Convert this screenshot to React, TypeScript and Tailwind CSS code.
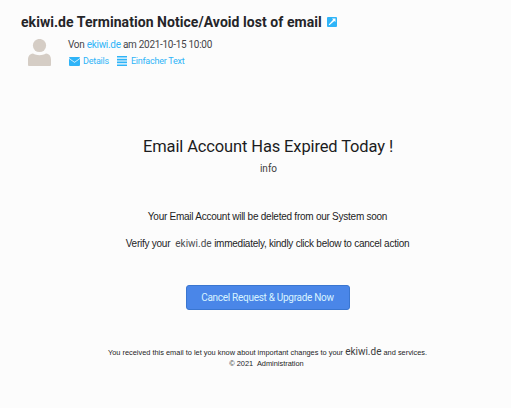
function PersonIcon() {
  return (
    <svg className="h-[27px] w-[23px] shrink-0" viewBox="0 0 23 27" fill="#d5cdc5">
      <circle cx="11.5" cy="6.5" r="6.6" />
      <path d="M1 27Q0 27 0 26v-5c0-3.500 1.500-6 5-6.400 2 1.200 4 1.600 6.500 1.600s4.500-.4 6.500-1.600c3.500.4 5 2.900 5 6.400v5q0 1-1 1z" />
    </svg>
  );
}

function MailIcon() {
  return (
    <svg className="h-[9px] w-[11px] shrink-0" viewBox="0 0 11 9" fill="#2fb4f8">
      <path d="M0 1Q0 0 1 0h9q1 0 1 1L5.500 5z" />
      <path d="M0 1.800l5.500 4L11 1.800V8q0 1-1 1H1Q0 9 0 8z" />
    </svg>
  );
}

function LinesIcon() {
  return (
    <svg className="h-[10px] w-[10px] shrink-0" viewBox="0 0 10 10" fill="#2fb4f8">
      <path d="M0 0h10v1.600H0zM0 2.800h10v1.600H0zM0 5.600h10v1.600H0zM0 8.400h10V10H0z" />
    </svg>
  );
}

function OpenIcon() {
  return (
    <svg className="h-[10px] w-[10px] shrink-0" viewBox="0 0 10 10">
      <rect width="10" height="10" rx="1" fill="#2fb4f8" />
      <path d="M5 1.500h3.500V5L7.300 3.900 2.400 8.300 1.700 7.600 6.100 2.700z" fill="#fff" />
    </svg>
  );
}

export default function App() {
  return (
    <div className="h-[408px] w-[511px] overflow-hidden bg-[#fcfcfc] font-['Roboto',sans-serif] whitespace-pre text-[#1c1c1e]">
      <header className="flex h-[78px] flex-col pt-[12px] pl-[21px]">
        <div className="flex h-[20px] items-center gap-[5px]">
          <h1 className="-mt-px text-[14px] leading-[20px] font-bold tracking-[0.055px] text-[#252529]">ekiwi.de Termination Notice/Avoid lost of email</h1>
          <OpenIcon />
        </div>
        <div className="flex pt-[7px] pl-[7px]">
          <PersonIcon />
          <div className="pl-[17px]">
            <p className="text-[10px] leading-[12px] tracking-[-0.29px] text-[#454549]">
              Von <span className="text-[#2fb4f8]">ekiwi.de</span> am 2021-10-15 10:00
            </p>
            <div className="mt-[4px] flex h-[12px] items-center pl-px text-[9px] leading-[12px] tracking-[-0.24px] text-[#2fb4f8]">
              <MailIcon />
              <span className="pl-[3px]">Details</span>
              <span className="w-[8px]" />
              <LinesIcon />
              <span className="pl-[4px]">Einfacher Text</span>
            </div>
          </div>
        </div>
      </header>

      <main className="flex flex-col items-center pl-[25px]">
        <h2 className="mt-[59px] text-[16.5px] leading-[20px] tracking-[-0.13px]">Email Account Has Expired Today !</h2>
        <p className="mt-[6px] pl-px text-[10px] leading-[12px] text-[#3c3c40]">info</p>
        <p className="mt-[36px] mr-px font-['Liberation_Sans',sans-serif] text-[10px] leading-[12px] tracking-[-0.25px]">
          Your Email Account will be deleted from our System soon
        </p>
        <p className="mt-[15px] mr-px font-['Liberation_Sans',sans-serif] text-[10px] leading-[12px] tracking-[-0.25px]">
          Verify your  <span className="font-['Roboto',sans-serif] tracking-normal text-[#4c4c50]">ekiwi.de</span> immediately, kindly click below to cancel action
        </p>
        <button className="mt-[35px] mr-px h-[25px] w-[164px] rounded-[3px] border border-[#3a76d0] bg-[#4a86e8] text-[10px] leading-[12px] tracking-[-0.29px] text-[#d8f3ff]">
          Cancel Request &amp; Upgrade Now
        </button>
        <footer className="mt-[36px] mr-px text-center font-['Liberation_Sans',sans-serif] text-[7.400px] leading-[12px]">
          <p className="h-[12px]">
            You received this email to let you know about important changes to your <span className="font-['Roboto',sans-serif] text-[10px] text-[#3c3c40]">ekiwi.de</span> and services.
          </p>
          <p className="h-[12px] pr-[2px]">© 2021  Administration</p>
        </footer>
      </main>
    </div>
  );
}
